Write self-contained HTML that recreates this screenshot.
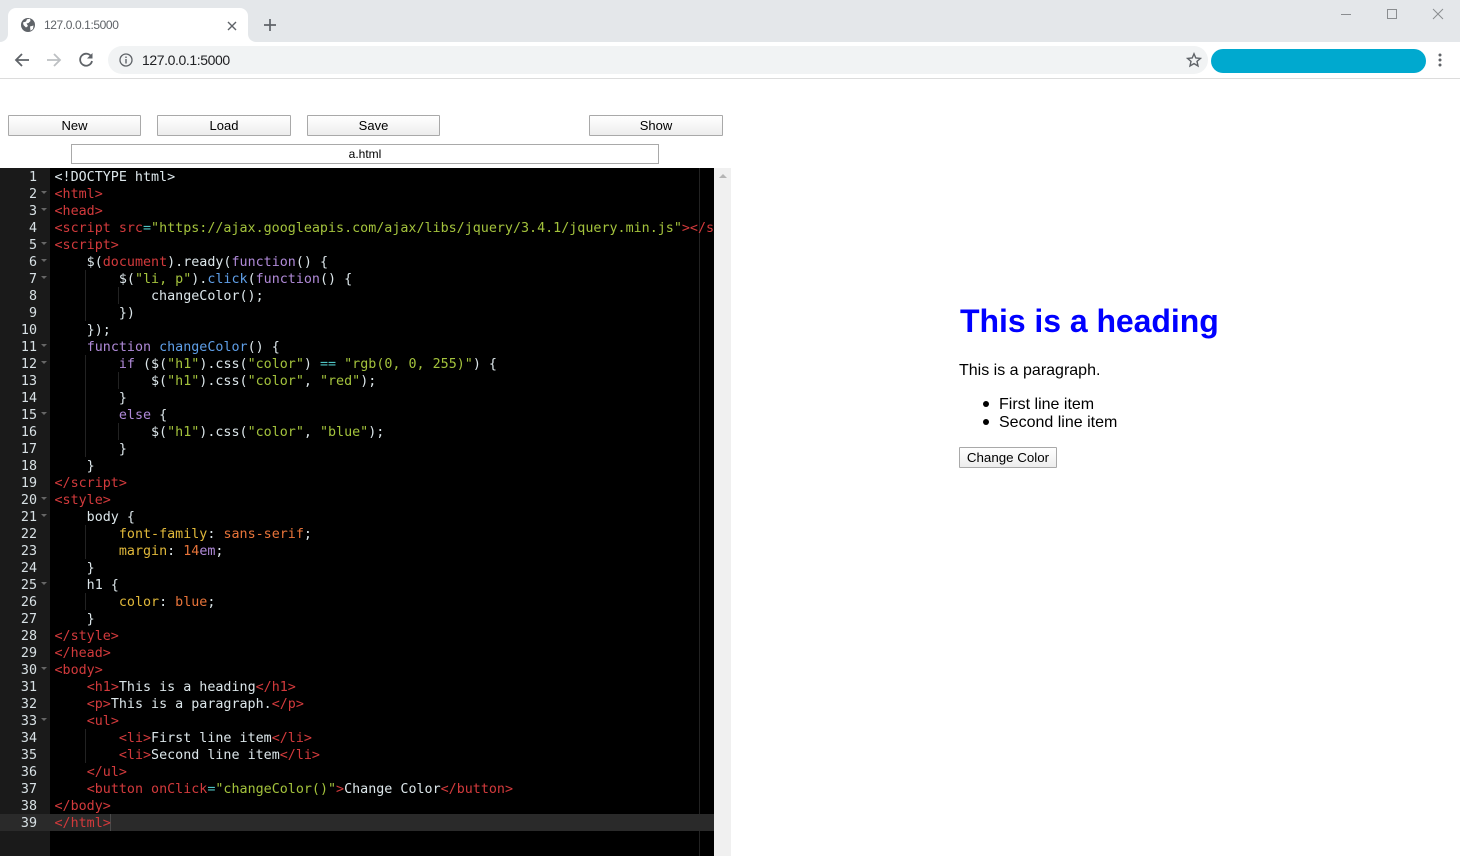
<!DOCTYPE html>
<html><head><meta charset="utf-8"><style>
html,body{margin:0;padding:0;width:1460px;height:856px;overflow:hidden;background:#fff;font-family:"Liberation Sans",sans-serif}
.a{position:absolute}
.btn{position:absolute;top:115px;height:21px;box-sizing:border-box;border:1px solid #a9a9a9;border-radius:1px;background:linear-gradient(#fff,#ededed);font-size:13px;line-height:19px;text-align:center;color:#000}
#code{position:absolute;left:4.5px;top:1px;font:13.37px/17px "DejaVu Sans Mono",monospace;color:#dce6ea;white-space:pre}
#nums{position:absolute;left:0;top:169px;width:37px;text-align:right;font:13.37px/17px "DejaVu Sans Mono",monospace;color:#d7e0e4;white-space:pre}
.g{position:absolute;width:1px;background:#222}
.f{position:absolute;left:41px;width:0;height:0;border-left:3px solid transparent;border-right:3px solid transparent;border-top:3px solid #666}
i{font-style:normal}
.t{color:#d23a3c}.s{color:#a3c23c}.k{color:#b08ad8}.b{color:#5f9fe8}.o{color:#e8743a}.y{color:#e0b83a}.c{color:#4fc4c4}
</style></head><body>
<div class="a" style="left:0;top:0;width:1460px;height:42px;background:#e4e7ea"></div>
<div class="a" style="left:8px;top:8px;width:240px;height:34px;background:#fff;border-radius:8px 8px 0 0"></div>
<div class="a" style="left:0;top:34px;width:8px;height:8px;background:#fff"></div><div class="a" style="left:0;top:34px;width:8px;height:8px;background:#e4e7ea;border-radius:0 0 8px 0"></div>
<div class="a" style="left:248px;top:34px;width:8px;height:8px;background:#fff"></div><div class="a" style="left:248px;top:34px;width:8px;height:8px;background:#e4e7ea;border-radius:0 0 0 8px"></div>
<svg class="a" style="left:20px;top:17px" width="16" height="16" viewBox="0 0 16 16"><circle cx="8" cy="8" r="7" fill="#5f6368"/><path d="M3 5.5 6 4.5 7 2.2 10 1.8 10.5 4 8.5 6 6.5 6.5 8 9 6 10.5 3.5 8zM10 9.5 13.5 8.5 13 12 10.5 13.8z" fill="#fff"/></svg>
<div class="a" style="left:44px;top:17px;font-size:12px;line-height:16px;color:#5f6368;letter-spacing:-.4px">127.0.0.1:5000</div>
<svg class="a" style="left:226px;top:20px" width="12" height="12" viewBox="0 0 12 12"><path d="M2 2 10 10M10 2 2 10" stroke="#5f6368" stroke-width="1.4"/></svg>
<svg class="a" style="left:263px;top:18px" width="14" height="14" viewBox="0 0 14 14"><path d="M7 1V13M1 7H13" stroke="#5f6368" stroke-width="1.7"/></svg>
<svg class="a" style="left:1340px;top:8px" width="110" height="13" viewBox="0 0 110 13"><path d="M1 6.5H11" stroke="#8a8d90"/><rect x="47.5" y="1.5" width="9" height="9" fill="none" stroke="#8a8d90"/><path d="M93 1 103 11M103 1 93 11" stroke="#8a8d90"/></svg>
<div class="a" style="left:0;top:78px;width:1460px;height:1px;background:#dcdcdc"></div>
<svg class="a" style="left:14px;top:52px" width="16" height="16" viewBox="0 0 16 16"><path d="M15 8H2M8 2 2 8 8 14" fill="none" stroke="#5f6368" stroke-width="1.8"/></svg>
<svg class="a" style="left:46px;top:52px" width="16" height="16" viewBox="0 0 16 16"><path d="M1 8H14M8 2 14 8 8 14" fill="none" stroke="#bdc0c3" stroke-width="1.8"/></svg>
<svg class="a" style="left:78px;top:51px" width="17" height="17" viewBox="0 0 17 17"><path d="M13.5 6A6 6 0 1 0 14 10" fill="none" stroke="#5f6368" stroke-width="1.8"/><path d="M14.5 2V7.5H9z" fill="#5f6368"/></svg>
<div class="a" style="left:108px;top:46px;width:1100px;height:28px;background:#f1f3f4;border-radius:14px"></div>
<svg class="a" style="left:119px;top:53px" width="14" height="14" viewBox="0 0 14 14"><circle cx="7" cy="7" r="6" fill="none" stroke="#5f6368" stroke-width="1.3"/><path d="M7 6V10.5M7 3.5V5" stroke="#5f6368" stroke-width="1.4"/></svg>
<div class="a" style="left:142px;top:52px;font-size:14px;line-height:16px;color:#202124;letter-spacing:-.4px">127.0.0.1:5000</div>
<svg class="a" style="left:1186px;top:52px" width="16" height="16" viewBox="0 0 16 16"><path d="M8 1.8 9.8 6 14.5 6.4 11 9.4 12 14 8 11.6 4 14 5 9.4 1.5 6.4 6.2 6z" fill="none" stroke="#5f6368" stroke-width="1.4"/></svg>
<div class="a" style="left:1211px;top:49px;width:215px;height:24px;background:#00a9cf;border-radius:12px"></div>
<svg class="a" style="left:1437px;top:53px" width="6" height="15" viewBox="0 0 6 15"><circle cx="3" cy="2" r="1.5" fill="#5f6368"/><circle cx="3" cy="7" r="1.5" fill="#5f6368"/><circle cx="3" cy="12" r="1.5" fill="#5f6368"/></svg>

<div class="btn" style="left:8px;width:133px">New</div>
<div class="btn" style="left:157px;width:134px">Load</div>
<div class="btn" style="left:307px;width:133px">Save</div>
<div class="btn" style="left:589px;width:134px">Show</div>
<div class="a" style="left:71px;top:144px;width:588px;height:20px;box-sizing:border-box;border:1px solid #a9a9a9;font-size:12px;line-height:18px;text-align:center;color:#000">a.html</div>

<div class="a" style="left:0;top:168px;width:50px;height:688px;background:#1a1a1a"></div>
<div class="a" style="left:50px;top:168px;width:664px;height:688px;background:#000"></div>
<div class="a" style="left:714px;top:168px;width:17px;height:688px;background:#f0f0f0"></div>
<div class="a" style="left:719px;top:174px;width:0;height:0;border-left:4px solid transparent;border-right:4px solid transparent;border-bottom:4px solid #b5b5b5"></div>
<div class="a" style="left:699px;top:168px;width:1px;height:688px;background:#222"></div>
<div class="a" style="left:0;top:814px;width:714px;height:17px;background:#2a2a2a"></div>
<div class="a" style="left:110px;top:814px;width:1px;height:17px;background:#4a4a4a"></div>

<div class="g" style="left:85px;top:270px;height:51px"></div>
<div class="g" style="left:85px;top:355px;height:102px"></div>
<div class="g" style="left:118px;top:287px;height:17px"></div>
<div class="g" style="left:118px;top:372px;height:17px"></div>
<div class="g" style="left:118px;top:423px;height:17px"></div>
<div class="g" style="left:85px;top:525px;height:34px"></div>
<div class="g" style="left:85px;top:593px;height:17px"></div>
<div class="g" style="left:85px;top:729px;height:34px"></div>

<div class="f" style="top:191px"></div><div class="f" style="top:208px"></div><div class="f" style="top:242px"></div><div class="f" style="top:259px"></div><div class="f" style="top:276px"></div><div class="f" style="top:344px"></div><div class="f" style="top:361px"></div><div class="f" style="top:412px"></div><div class="f" style="top:497px"></div><div class="f" style="top:514px"></div><div class="f" style="top:582px"></div><div class="f" style="top:667px"></div><div class="f" style="top:718px"></div>

<div id="nums">1
2
3
4
5
6
7
8
9
10
11
12
13
14
15
16
17
18
19
20
21
22
23
24
25
26
27
28
29
30
31
32
33
34
35
36
37
38
39</div>

<div class="a" style="left:50px;top:168px;width:664px;height:688px;overflow:hidden"><div id="code">&lt;!DOCTYPE html&gt;
<i class="t">&lt;html&gt;</i>
<i class="t">&lt;head&gt;</i>
<i class="t">&lt;script src</i><i class="c">=</i><i class="s">"https://ajax.googleapis.com/ajax/libs/jquery/3.4.1/jquery.min.js"</i><i class="t">&gt;&lt;/script&gt;</i>
<i class="t">&lt;script&gt;</i>
    $(<i class="t">document</i>).ready(<i class="k">function</i>() {
        $(<i class="s">"li, p"</i>).<i class="b">click</i>(<i class="k">function</i>() {
            changeColor();
        })
    });
    <i class="k">function</i> <i class="b">changeColor</i>() {
        <i class="k">if</i> ($(<i class="s">"h1"</i>).css(<i class="s">"color"</i>) <i class="c">==</i> <i class="s">"rgb(0, 0, 255)"</i>) {
            $(<i class="s">"h1"</i>).css(<i class="s">"color"</i>, <i class="s">"red"</i>);
        }
        <i class="k">else</i> {
            $(<i class="s">"h1"</i>).css(<i class="s">"color"</i>, <i class="s">"blue"</i>);
        }
    }
<i class="t">&lt;/script&gt;</i>
<i class="t">&lt;style&gt;</i>
    body {
        <i class="y">font-family</i>: <i class="o">sans-serif</i>;
        <i class="y">margin</i>: <i class="o">14</i><i class="k">em</i>;
    }
    h1 {
        <i class="y">color</i>: <i class="o">blue</i>;
    }
<i class="t">&lt;/style&gt;</i>
<i class="t">&lt;/head&gt;</i>
<i class="t">&lt;body&gt;</i>
    <i class="t">&lt;h1&gt;</i>This is a heading<i class="t">&lt;/h1&gt;</i>
    <i class="t">&lt;p&gt;</i>This is a paragraph.<i class="t">&lt;/p&gt;</i>
    <i class="t">&lt;ul&gt;</i>
        <i class="t">&lt;li&gt;</i>First line item<i class="t">&lt;/li&gt;</i>
        <i class="t">&lt;li&gt;</i>Second line item<i class="t">&lt;/li&gt;</i>
    <i class="t">&lt;/ul&gt;</i>
    <i class="t">&lt;button onClick</i><i class="c">=</i><i class="s">"changeColor()"</i><i class="t">&gt;</i>Change Color<i class="t">&lt;/button&gt;</i>
<i class="t">&lt;/body&gt;</i>
<i class="t">&lt;/html&gt;</i></div></div>

<div class="a" style="left:960px;top:303px;font-size:32px;line-height:37px;font-weight:bold;color:#00f;white-space:nowrap;letter-spacing:-.05px">This is a heading</div>
<div class="a" style="left:959px;top:362px;font-size:16px;line-height:18px;white-space:nowrap">This is a paragraph.</div>
<div class="a" style="left:999px;top:396px;font-size:16px;line-height:18px;white-space:nowrap">First line item</div>
<div class="a" style="left:999px;top:414px;font-size:16px;line-height:18px;white-space:nowrap">Second line item</div>
<div class="a" style="left:983px;top:401px;width:6px;height:6px;border-radius:50%;background:#000"></div>
<div class="a" style="left:983px;top:419px;width:6px;height:6px;border-radius:50%;background:#000"></div>
<div class="a" style="left:959px;top:447px;width:98px;height:21px;box-sizing:border-box;border:1px solid #a9a9a9;border-radius:1px;background:linear-gradient(#fff,#ededed);font-size:13.33px;line-height:19px;text-align:center;white-space:nowrap">Change Color</div>
</body></html>
